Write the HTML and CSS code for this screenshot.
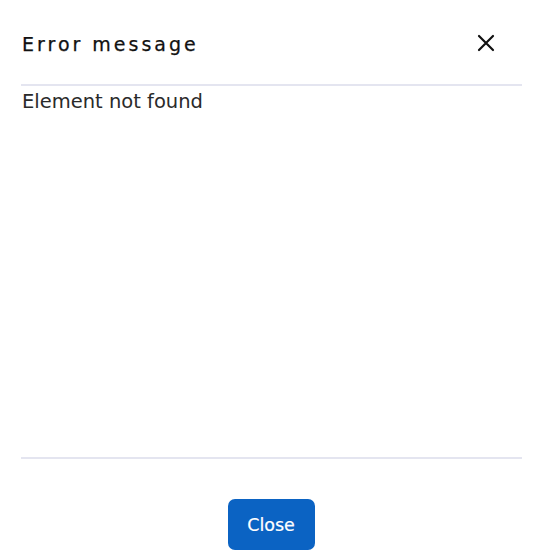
FILE: index.html
```html
<!DOCTYPE html>
<html lang="en">
<head>
  <meta charset="UTF-8">
  <title>Error message</title>
  <link rel="stylesheet" href="styles.css">
</head>
<body>
  <div class="modal">
    <div class="modal-header">
      <h2 class="modal-title">Error message</h2>
      <button class="btn-close" aria-label="Close">
        <svg width="18" height="18" viewBox="0 0 18 18">
          <path d="M2 2 L16 16 M16 2 L2 16" stroke="#111" stroke-width="2.2" stroke-linecap="round" fill="none"/>
        </svg>
      </button>
    </div>
    <div class="modal-body">
      <p>Element not found</p>
    </div>
    <div class="modal-footer">
      <button class="btn-primary">Close</button>
    </div>
  </div>
</body>
</html>
```

FILE: styles.css
```css
body {
  margin: 0;
  padding: 0;
  background: #fff;
  font-family: 'DejaVu Sans', Arial, sans-serif;
  color: #222;
}
.modal {
  padding: 0 24px 0 21px;
}
.modal-header {
  display: flex;
  justify-content: space-between;
  align-items: center;
  height: 84px;
  border-bottom: 2px solid #e4e5f0;
  padding: 0 2px 0 1px;
}
.modal-title {
  margin: 4px 0 0;
  font-size: 19px;
  font-weight: normal;
  letter-spacing: 3px;
  color: #111;
  -webkit-text-stroke: 0.25px #111;
}
.btn-close {
  background: none;
  border: none;
  padding: 0;
  margin: 2px 25px 0 0;
  width: 18px;
  height: 18px;
  cursor: pointer;
}
.modal-body {
  height: 371px;
  border-bottom: 2px solid #e4e5f0;
}
.modal-body p {
  margin: 0;
  padding: 3px 0 0 1px;
  font-size: 19.5px;
  line-height: 26px;
  color: #2a2a2a;
}
.modal-footer {
  display: flex;
  justify-content: center;
  padding-top: 40px;
}
.btn-primary {
  width: 87px;
  height: 51px;
  background-color: #0b63c3;
  color: white;
  border: none;
  border-radius: 7px;
  font-family: 'DejaVu Sans', Arial, sans-serif;
  font-size: 17.5px;
  -webkit-text-stroke: 0.2px white;
  cursor: pointer;
  margin-right: 1px;
}
```
